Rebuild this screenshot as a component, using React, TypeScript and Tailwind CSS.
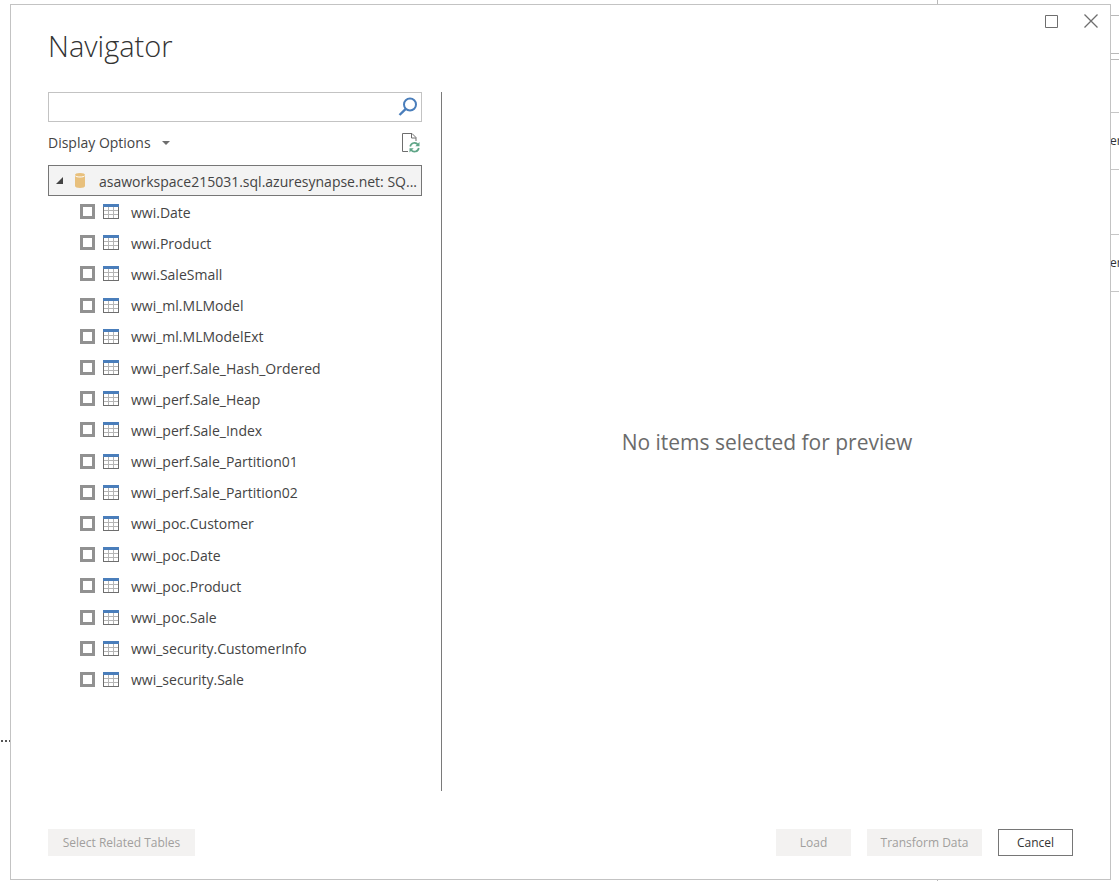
import React from "react";

const tables = [
  "wwi.Date",
  "wwi.Product",
  "wwi.SaleSmall",
  "wwi_ml.MLModel",
  "wwi_ml.MLModelExt",
  "wwi_perf.Sale_Hash_Ordered",
  "wwi_perf.Sale_Heap",
  "wwi_perf.Sale_Index",
  "wwi_perf.Sale_Partition01",
  "wwi_perf.Sale_Partition02",
  "wwi_poc.Customer",
  "wwi_poc.Date",
  "wwi_poc.Product",
  "wwi_poc.Sale",
  "wwi_security.CustomerInfo",
  "wwi_security.Sale",
];

function SearchIcon() {
  return (
    <svg width="20" height="20" viewBox="0 0 20 20" fill="none" stroke="#4a7ebb" aria-hidden="true">
      <circle cx="12" cy="7.5" r="6" strokeWidth="2" />
      <path d="M7.8 11.8 1.5 18" strokeWidth="2.4" />
    </svg>
  );
}

function RefreshFileIcon() {
  return (
    <svg width="18" height="20" viewBox="0 0 18 20" fill="none" aria-hidden="true">
      <path d="M6 18.5H.5V.5h9.500l4 4V8" stroke="#6e6e6e" />
      <path d="M9.500.5v4.500H14" stroke="#6e6e6e" />
      <path d="M8.200 13.500a4.300 4.300 0 0 1 7.800-1.700M16.800 15a4.300 4.300 0 0 1-7.800 1.700" stroke="#5fa587" strokeWidth="1.700" />
      <path d="M17.500 9v4.200h-4.200zM7.500 19.500v-4.200h4.200z" fill="#5fa587" />
    </svg>
  );
}

function DatabaseIcon() {
  return (
    <svg width="10" height="15" viewBox="0 0 10 15" aria-hidden="true">
      <path d="M0 2v11c0 1.200 2.200 2 5 2s5-.8 5-2V2z" fill="#e8c07d" />
      <ellipse cx="5" cy="2" rx="5" ry="2" fill="#e8c07d" />
      <path d="M0 2.500c.6 1.100 2.500 1.500 5 1.500s4.400-.4 5-1.500" fill="none" stroke="#fff" />
    </svg>
  );
}

function TableIcon() {
  return (
    <svg width="16" height="15" viewBox="0 0 16 15" shapeRendering="crispEdges" aria-hidden="true">
      <path d="M1 6.500h14M1 10.500h14M5.500 3v11M10.500 3v11" stroke="#b5b5b5" />
      <path d="M.5 3v11.500h15V3" fill="none" stroke="#6e6e6e" />
      <path d="M0 0h16v3H0z" fill="#4a7ebb" />
    </svg>
  );
}

function Backdrop() {
  return (
    <div className="absolute inset-0 flex justify-between overflow-hidden" aria-hidden="true">
      <div className="flex flex-col pt-[740px]">
        <div className="flex gap-[2px] pl-px">
          <span className="size-[2px] bg-[#555]" />
          <span className="size-[2px] bg-[#555]" />
          <span className="size-[2px] bg-[#555]" />
        </div>
      </div>
      <div className="flex w-[182px] justify-end border-l border-[#b8b8b8]">
        <div className="w-[9px] overflow-hidden text-xs leading-[56px] text-[#333]">
          <div className="h-4 border-b border-[#b8b8b8]" />
          <div className="h-[38px] border-b border-[#b8b8b8]" />
          <div className="h-[6px] border-b border-[#b8b8b8]" />
          <div className="h-[53px] border-b border-[#c6c6c6]" />
          <div className="h-[57px] border-b border-[#c6c6c6]">er</div>
          <div className="h-[65px] border-b border-[#c6c6c6]" />
          <div className="h-[57px] border-b border-[#c6c6c6]">er</div>
        </div>
      </div>
    </div>
  );
}

export default function App() {
  return (
    <div className="relative flex min-h-screen bg-white pt-1 pr-2 pb-px pl-[10px] font-['Open_Sans','Noto_Sans',sans-serif] text-[#444]">
      <Backdrop />
      <section
        role="dialog"
        aria-labelledby="title"
        className="relative flex flex-1 flex-col border border-[#c3c3c3] bg-white pb-[23px] pl-[37px]"
      >
        <header className="flex h-[87px] items-start justify-between pr-[9px]">
          <h1 id="title" className="pt-[23px] text-[29px] leading-9 font-light text-[#333]">
            Navigator
          </h1>
          <div className="flex gap-5 pt-[6px]">
            <button type="button" aria-label="Maximize" className="flex size-5 items-center justify-center">
              <svg width="13" height="13" viewBox="0 0 13 13" aria-hidden="true">
                <path d="M.5.5h12v12H.5z" fill="none" stroke="#6e6e6e" />
              </svg>
            </button>
            <button type="button" aria-label="Close" className="flex size-5 items-center justify-center">
              <svg width="14" height="14" viewBox="0 0 14 14" aria-hidden="true">
                <path d="m.5.5 13 13m0-13-13 13" stroke="#6e6e6e" strokeWidth="1.300" />
              </svg>
            </button>
          </div>
        </header>

        <main className="flex flex-1 pr-[18px]">
          <div className="flex w-[394px] shrink-0 flex-col border-r border-[#7a7a7a] pr-[19px]">
            <label className="flex h-[30px] items-center border border-[#c3c3c3] pr-[3px]">
              <input type="text" aria-label="Search" className="h-full min-w-0 flex-1 px-2 text-sm outline-none" />
              <SearchIcon />
            </label>
            <div className="flex h-[43px] items-center justify-between pr-[2px] pb-[2px]">
              <button type="button" className="flex items-center gap-[11px] text-sm">
                Display Options
                <svg width="8" height="4" viewBox="0 0 8 4" aria-hidden="true">
                  <path d="M0 0h8L4 4z" fill="#6e6e6e" />
                </svg>
              </button>
              <button type="button" aria-label="Refresh">
                <RefreshFileIcon />
              </button>
            </div>
            <button
              type="button"
              aria-expanded="true"
              className="flex h-[31px] items-center border border-[#767676] bg-[#f3f3f3] pr-1 pl-[7px] text-left text-sm"
            >
              <svg width="7" height="7" viewBox="0 0 7 7" className="shrink-0" aria-hidden="true">
                <path d="M7 0v7H0z" fill="#444" />
              </svg>
              <span className="mr-[14px] ml-3 shrink-0">
                <DatabaseIcon />
              </span>
              <span className="truncate pt-[2px]">asaworkspace215031.sql.azuresynapse.net: SQ...</span>
            </button>
            <ul className="grid h-[499px] auto-rows-fr">
              {tables.map((name) => (
                <li key={name} className="flex">
                  <label className="flex flex-1 items-center pl-8 text-sm">
                    <input
                      type="checkbox"
                      className="size-[15px] shrink-0 appearance-none border-3 border-[#919191] bg-white checked:bg-[#4a7ebb]"
                    />
                    <span className="mr-3 ml-2">
                      <TableIcon />
                    </span>
                    <span className="pt-[2px]">{name}</span>
                  </label>
                </li>
              ))}
            </ul>
          </div>
          <div className="flex flex-1 items-center justify-center text-[21px] leading-8 text-[#6b6b6b]">
            No items selected for preview
          </div>
        </main>

        <footer className="flex items-center gap-4 pt-[38px] pr-[37px] text-xs">
          <button type="button" disabled className="mr-auto h-[27px] w-[147px] bg-[#f3f2f1] pt-px text-[#a19f9d]">
            Select Related Tables
          </button>
          <button type="button" disabled className="h-[27px] w-[75px] bg-[#f3f2f1] pt-px text-[#a19f9d]">
            Load
          </button>
          <button type="button" disabled className="h-[27px] w-[115px] bg-[#f3f2f1] pt-px text-[#a19f9d]">
            Transform Data
          </button>
          <button type="button" className="h-[27px] w-[75px] border border-[#767676] bg-white pt-px text-[#333]">
            Cancel
          </button>
        </footer>
      </section>
    </div>
  );
}
